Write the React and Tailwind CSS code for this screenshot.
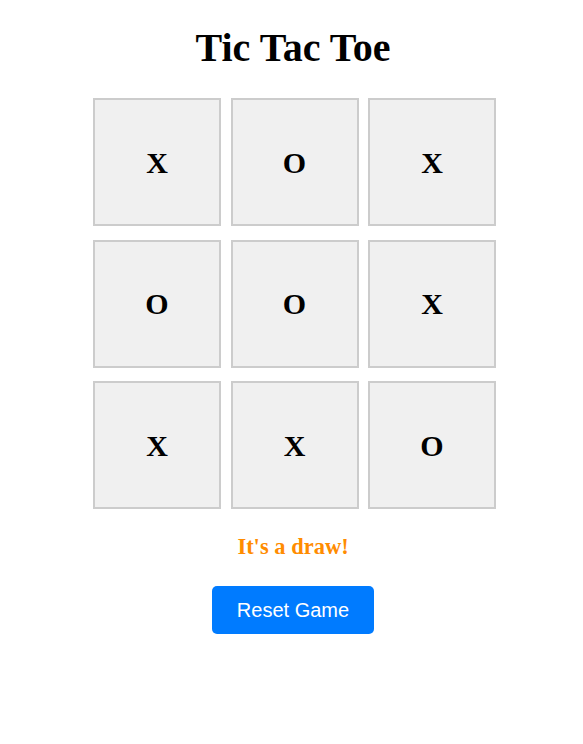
import React, { useState } from "react";

const START = ["X", "O", "X", "O", "O", "X", "X", "X", "O"];

const serif = { fontFamily: '"Liberation Serif", "Times New Roman", serif' };

export default function App() {
  const [board, setBoard] = useState(START);

  return (
    <div className="min-h-[744px] bg-white flex flex-col items-center" style={serif}>
      <h1 className="mt-[25.5px] pl-[3px] text-[40px] leading-[44px] font-bold text-black">Tic Tac Toe</h1>

      <div className="mt-[28.8px] pl-[6px]">
        <div className="grid grid-cols-[repeat(3,128px)] gap-x-[9.5px] gap-y-[13.5px]">
          {board.map((v, i) => (
            <button
              key={i}
              type="button"
              className="h-[128px] w-[128px] border-2 border-[#cccccc] bg-[#f0f0f0] flex items-center justify-center text-[30px] font-bold text-black"
              style={serif}
            >
              {v}
            </button>
          ))}
        </div>
      </div>

      <div className="mt-[25px] pl-[3px] text-[22.5px] leading-[26px] font-bold text-[#ff8c00]">It's a draw!</div>

      <button
        type="button"
        onClick={() => setBoard(Array(9).fill(""))}
        className="mt-[25.5px] ml-[3px] h-[48px] w-[162px] rounded-[5px] bg-[#007bff] text-white text-[20px]"
        style={{ fontFamily: '"Liberation Sans", Arial, sans-serif' }}
      >
        Reset Game
      </button>
    </div>
  );
}
